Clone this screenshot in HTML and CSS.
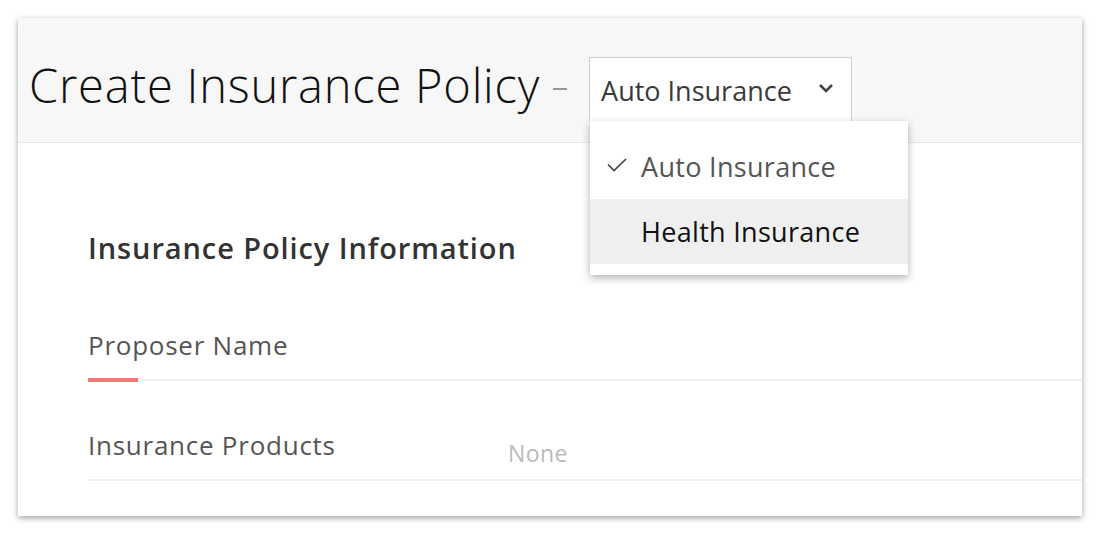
FILE: index.html
```html
<!DOCTYPE html>
<html>
<head>
<meta charset="utf-8">
<link rel="stylesheet" href="styles.css">
</head>
<body>
<div class="card">
  <div class="header">
    <h1 class="title">Create Insurance Policy</h1>
    <span class="dash"></span>
    <div class="select-wrap">
      <div class="select">
        <span class="select-text">Auto Insurance</span>
        <svg class="chev" width="16" height="10" viewBox="0 0 16 10"><path d="M2 2 L8 8 L14 2" fill="none" stroke="#444" stroke-width="2.6"/></svg>
      </div>
      <div class="menu">
        <div class="item selected">
          <svg class="check" width="20" height="14" viewBox="0 0 20 14"><path d="M1 6.5 L7 12.5 L19 1" fill="none" stroke="#444" stroke-width="1.7"/></svg>
          <span>Auto Insurance</span>
        </div>
        <div class="item hover"><span>Health Insurance</span></div>
      </div>
    </div>
  </div>
  <div class="content">
    <h2 class="section">Insurance Policy Information</h2>
    <div class="row active">
      <span class="label">Proposer Name</span>
    </div>
    <div class="row">
      <span class="label">Insurance Products</span>
      <span class="value">None</span>
    </div>
  </div>
</div>
</body>
</html>
```
FILE: styles.css
```css
html, body {
  margin: 0;
  background: #ffffff;
  font-family: "Open Sans", Lato, sans-serif;
}
body {
  padding: 18px;
  min-height: 534px;
  box-sizing: border-box;
}
.card {
  width: 1064px;
  height: 498px;
  background: #fff;
  box-shadow: 0 2px 6px rgba(0,0,0,0.38);
  position: relative;
}
.header {
  height: 124px;
  background: #f7f7f7;
  border-bottom: 1px solid #e6e6e6;
  display: flex;
  align-items: center;
  padding-left: 11px;
}
.title {
  margin: 0;
  font-weight: 300;
  font-size: 47px;
  letter-spacing: 0.8px;
  color: #111;
  padding-top: 10px;
}
.dash {
  width: 14px;
  height: 2px;
  background: #999;
  margin: 18px 22px 0 13px;
}
.select-wrap {
  position: relative;
  align-self: flex-start;
  margin-top: 39px;
}
.select {
  border: 1px solid #cfcfcf;
  background: #fff;
  display: flex;
  align-items: center;
  padding-left: 11px;
  box-sizing: border-box;
  width: 263px;
  height: 65px;
}
.select-text {
  font-size: 27px;
  color: #3a3a3a;
  flex: 1;
  padding-top: 1px;
}
.chev {
  margin-right: 17px;
  margin-top: -3px;
}
.menu {
  position: absolute;
  top: 64px;
  left: 1px;
  width: 318px;
  background: #fff;
  box-shadow: 0 3px 8px rgba(0,0,0,0.3);
  padding: 13px 0 11px 0;
  z-index: 2;
}
.item {
  height: 65px;
  display: flex;
  align-items: center;
  padding-left: 51px;
  font-size: 27px;
  letter-spacing: 0.3px;
  color: #555;
  position: relative;
}
.item.hover {
  background: #efefef;
  color: #111;
}
.check {
  position: absolute;
  left: 17px;
  top: 24px;
}
.content {
  padding-left: 70px;
}
.section {
  margin: 0;
  padding-top: 87px;
  padding-bottom: 15px;
  font-size: 29px;
  letter-spacing: 0.9px;
  font-weight: 600;
  color: #333;
  line-height: 36px;
}
.row {
  height: 100px;
  border-bottom: 2px solid #efefef;
  display: flex;
  align-items: flex-end;
  padding-bottom: 16px;
  box-sizing: border-box;
  position: relative;
}
.row.active::after {
  content: "";
  position: absolute;
  left: 0;
  bottom: -3px;
  width: 50px;
  height: 4px;
  background: #f07772;
}
.label {
  font-size: 26px;
  letter-spacing: 0.75px;
  color: #555;
  width: 420px;
}
.value {
  font-size: 23px;
  letter-spacing: 0.4px;
  color: #bbb;
  margin-bottom: -6px;
}
```
